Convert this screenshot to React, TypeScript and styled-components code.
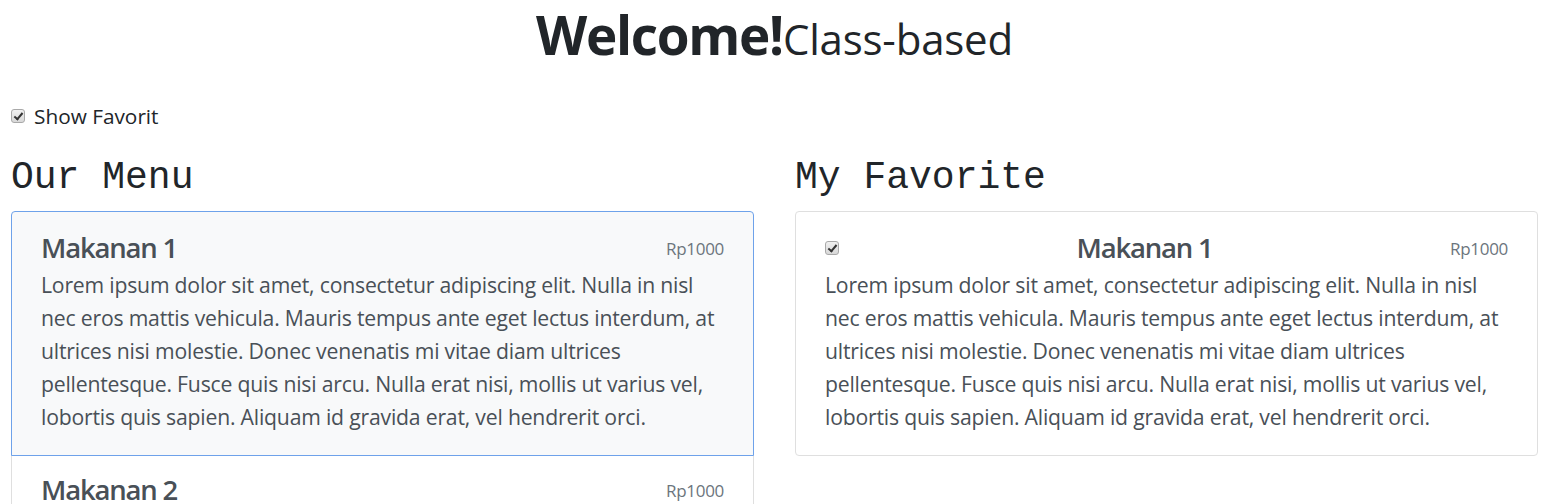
import styled, { createGlobalStyle } from 'styled-components'

const GlobalStyle = createGlobalStyle`
  html, body {
    margin: 0;
    padding: 0;
    background: #ffffff;
    font-family: 'Open Sans', 'Noto Sans', sans-serif;
    color: #212529;
    overflow: hidden;
  }
`

const Page = styled.div`
  padding: 0 25px 0 11px;
`

const Header = styled.h1`
  margin: 0;
  padding-top: 1px;
  text-align: center;
  font-size: 53px;
  font-weight: 700;
  line-height: 67px;
  letter-spacing: -1.3px;
  color: #212529;
`

const Sub = styled.small`
  font-size: 42px;
  font-weight: 400;
  letter-spacing: -0.2px;
`

const Toggle = styled.label`
  display: flex;
  align-items: center;
  gap: 9px;
  margin-top: 29px;
  font-size: 20.8px;
  line-height: 30px;
  color: #212529;
`

const Check = styled.input.attrs({ type: 'checkbox' })`
  appearance: none;
  margin: 0;
  width: 14px;
  height: 14px;
  border: 1px solid #a9a9a9;
  border-radius: 3px;
  background: linear-gradient(#f0f0f0, #d8d8d8);
  position: relative;
  flex-shrink: 0;

  &:checked::after {
    content: '';
    position: absolute;
    left: 4px;
    top: 1px;
    width: 3px;
    height: 7px;
    border: solid #333;
    border-width: 0 2px 2px 0;
    transform: rotate(40deg);
  }
`

const Columns = styled.div`
  display: grid;
  grid-template-columns: 1fr 1fr;
  column-gap: 41px;
`

const Column = styled.section`
  min-width: 0;
`

const SectionTitle = styled.h2`
  margin: 24px 0 11px;
  font-family: 'Liberation Mono', 'Courier New', monospace;
  font-weight: 400;
  font-size: 38px;
  line-height: 45px;
  color: #212529;
`

const List = styled.div`
  display: flex;
  flex-direction: column;
`

const Item = styled.div<{ $active?: boolean }>`
  padding: 17px 29px 22px;
  border: 1px solid ${(p) => (p.$active ? '#6ea2ea' : '#dfdfdf')};
  background: ${(p) => (p.$active ? '#f8f9fa' : '#ffffff')};
  color: #495057;
  margin-top: -1px;
  position: relative;
  z-index: ${(p) => (p.$active ? 1 : 0)};

  &:first-child {
    margin-top: 0;
    padding-top: 19px;
    border-top-left-radius: 4px;
    border-top-right-radius: 4px;
  }
  &:last-child {
    border-bottom-left-radius: 4px;
    border-bottom-right-radius: 4px;
  }
`

const ItemHead = styled.div`
  display: flex;
  justify-content: space-between;
  align-items: center;
`

const ItemTitle = styled.h4`
  margin: 0;
  font-size: 27.5px;
  font-weight: 600;
  line-height: 34px;
  letter-spacing: -1.2px;
  color: #495057;
`

const Price = styled.small`
  font-size: 17px;
  color: #6c757d;
  letter-spacing: -0.3px;
`

const Desc = styled.p`
  margin: 3px 0 0;
  font-size: 21.2px;
  line-height: 33px;
  letter-spacing: -0.2px;
  color: #495057;
`

const lorem =
  'Lorem ipsum dolor sit amet, consectetur adipiscing elit. Nulla in nisl nec eros mattis vehicula. Mauris tempus ante eget lectus interdum, at ultrices nisi molestie. Donec venenatis mi vitae diam ultrices pellentesque. Fusce quis nisi arcu. Nulla erat nisi, mollis ut varius vel, lobortis quis sapien. Aliquam id gravida erat, vel hendrerit orci.'

const menu = [
  { id: 1, name: 'Makanan 1', price: 1000 },
  { id: 2, name: 'Makanan 2', price: 1000 },
  { id: 3, name: 'Makanan 3', price: 1000 },
]

export default function App() {
  return (
    <Page>
      <GlobalStyle />
      <Header>
        Welcome!<Sub>Class-based</Sub>
      </Header>
      <Toggle>
        <Check defaultChecked />
        Show Favorit
      </Toggle>
      <Columns>
        <Column>
          <SectionTitle>Our Menu</SectionTitle>
          <List>
            {menu.map((m, i) => (
              <Item key={m.id} $active={i === 0}>
                <ItemHead>
                  <ItemTitle>{m.name}</ItemTitle>
                  <Price>Rp{m.price}</Price>
                </ItemHead>
                <Desc>{lorem}</Desc>
              </Item>
            ))}
          </List>
        </Column>
        <Column>
          <SectionTitle>My Favorite</SectionTitle>
          <List>
            <Item>
              <ItemHead>
                <Check defaultChecked />
                <ItemTitle>{menu[0].name}</ItemTitle>
                <Price>Rp{menu[0].price}</Price>
              </ItemHead>
              <Desc>{lorem}</Desc>
            </Item>
          </List>
        </Column>
      </Columns>
    </Page>
  )
}
